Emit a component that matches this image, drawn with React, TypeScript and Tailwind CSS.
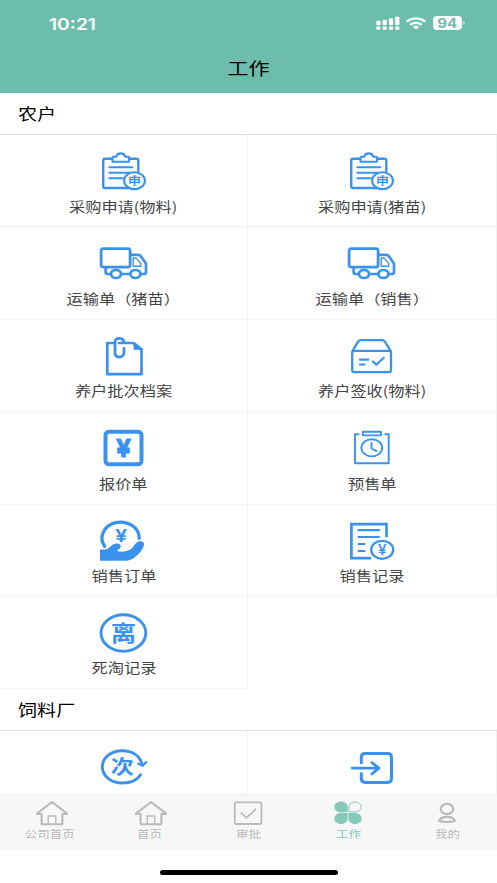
import type { ReactNode } from "react";

type IconProps = { children: ReactNode };

function Icon({ children }: IconProps) {
  return (
    <svg
      width="56"
      height="44"
      viewBox="0 0 56 44"
      fill="none"
      stroke="currentColor"
      strokeWidth="2.7"
      strokeLinecap="round"
      strokeLinejoin="round"
      className="shrink-0 overflow-visible text-[#3b92ee]"
    >
      {children}
    </svg>
  );
}

type GlyphProps = { x: number; y: number; size: number; children: string };

function Glyph({ x, y, size, children }: GlyphProps) {
  return (
    <text
      transform={`translate(${x} ${y}) scale(1.18 1)`}
      textAnchor="middle"
      fontSize={size}
      fontWeight={700}
      fill="currentColor"
      stroke="none"
      className="font-['Noto_Sans_CJK_SC',sans-serif]"
    >
      {children}
    </text>
  );
}

type YuanProps = { x: number; y: number; size: number; wide?: number; weight?: number; outline?: number };

function Yuan({ x, y, size, wide = 1.2, weight = 600, outline = 0.2 }: YuanProps) {
  return (
    <text
      transform={`translate(${x} ${y}) scale(${wide} 1)`}
      textAnchor="middle"
      fontSize={size}
      fontWeight={weight}
      fill="currentColor"
      strokeWidth={outline}
      className="font-['Inter',sans-serif]"
    >
      ¥
    </text>
  );
}

const ApplyIcon = () => (
  <Icon>
    <path d="M16 9.8H9Q7.2 9.8 7.2 11.5V37.3Q7.2 39 9 39H40.5Q42.3 39 42.3 37.3V11.5Q42.3 9.8 40.5 9.8H33" strokeWidth="2.4" />
    <path d="M16.5 12.8V8.5Q16.5 7.8 17.5 7.8H20.2Q21 4.4 24.7 4.4T29.2 7.8H32Q33 7.8 33 8.5V12.8Z" strokeWidth="2.1" />
    <path d="M13.3 18.3H36.3M13.3 23.7H36.3M13.3 29.3H27" strokeWidth="1.9" />
    <ellipse cx="38.5" cy="31.7" rx="10.4" ry="8.4" fill="white" strokeWidth="2.1" />
    <Glyph x={38.4} y={35.8} size={11}>申</Glyph>
  </Icon>
);

const TruckIcon = () => (
  <Icon>
    <rect x="5.1" y="7.7" width="29" height="18.4" rx="2.2" strokeWidth="2.8" />
    <path d="M35 13.9H42.2Q43.8 13.9 44.8 15.3L49.3 21.5Q50 22.5 50 24V31Q50 33 48 33H45M9.6 27V31.3Q9.6 33 11.5 33H15M25.5 33H34" />
    <path d="M37.2 17H39.5Q40.2 17 40.7 17.6L44.2 21.6Q44.7 22.2 44.7 23V25.3H37.2Z" strokeWidth="1.4" />
    <ellipse cx="20" cy="33" rx="5" ry="4" />
    <ellipse cx="39.4" cy="33" rx="5" ry="4" />
  </Icon>
);

const FileIcon = () => (
  <Icon>
    <path d="M17 9H11.3V40.2H45.5V16L37.5 9H23" />
    <path d="M38 8.5V15.3H46.5Z" fill="currentColor" strokeWidth="1" />
    <path d="M19 10V18.5Q19 23 23.3 23T28 18.5V14.5" strokeWidth="2.8" />
    <path d="M19 10V8Q19 4.3 23.3 4.3Q27 4.3 27.8 7.4" strokeWidth="2.8" />
  </Icon>
);

const SignIcon = () => (
  <Icon>
    <rect x="8.2" y="16.8" width="38.8" height="21.3" rx="2.2" strokeWidth="2.3" />
    <path d="M8.5 17L14.1 7.7Q15.1 6.1 17 6.1H38Q39.9 6.1 40.9 7.7L46.7 17" strokeWidth="2.3" />
    <path d="M16 25.7H24.3M16 30.5H20.5M28.8 27.5L32.3 30.8L39.7 23.8" strokeWidth="2.2" />
  </Icon>
);

const QuoteIcon = () => (
  <Icon>
    <rect x="9.5" y="5.7" width="36" height="32.6" rx="3.5" strokeWidth="4" />
    <Yuan x={27.4} y={31} size={24} wide={1.1} weight={700} outline={0.8} />
  </Icon>
);

const PresaleIcon = () => (
  <Icon>
    <g strokeWidth="1.9">
      <path d="M14.5 8.3H11V37.3H44.7V8.3H41.3" />
      <rect x="18.8" y="5.7" width="18.2" height="3.7" rx="0.5" />
      <ellipse cx="27.8" cy="21.8" rx="10.4" ry="8.6" />
      <path d="M27.5 17V22.5L32.5 25.1" />
    </g>
  </Icon>
);

const OrderIcon = () => (
  <Icon>
    <path d="M8.6 27.3A18.6 16 0 1 1 43.2 19.3" strokeWidth="3.3" />
    <Yuan x={25.2} y={23.2} size={17.5} />
    <path
      d="M4 30.4H9.5C13.5 30 15.5 25.2 20 24.6C23.5 24.3 25.8 26.3 24.2 29C23.3 30.5 21.2 31.2 21.2 31.8C24 33.5 32 33 36 29.3C38.3 27 39.3 23.2 43.5 22.3C46.6 21.8 48.5 23.4 48 25.8C47 30.5 42.5 36 37.5 39.2C34 41.2 32 41.7 28 41.7H4Z"
      fill="currentColor"
      stroke="none"
    />
  </Icon>
);

const RecordIcon = () => (
  <Icon>
    <path d="M42.5 18.3V5.2H7.4V39.2H27" strokeLinecap="butt" strokeLinejoin="miter" />
    <path d="M14.5 11.2H35M14.5 18H35M14.5 25H20.5M14.5 32H20.5" strokeWidth="2.2" />
    <ellipse cx="38.2" cy="30.8" rx="11" ry="9" fill="white" strokeWidth="2.3" />
    <Yuan x={38.2} y={36.1} size={14.5} wide={1.05} weight={500} />
  </Icon>
);

const DeathIcon = () => (
  <Icon>
    <ellipse cx="27.4" cy="22" rx="22.4" ry="18.3" strokeWidth="2.9" />
    <Glyph x={27.4} y={29.9} size={21.5}>离</Glyph>
  </Icon>
);

const BatchIcon = () => (
  <Icon>
    <path d="M46 19C43.5 10.5 36 5.8 26.3 5.8C15 5.8 6.3 12.7 6.3 21.8S15 38 26.3 38C34.5 38 41.5 34.8 44.5 29.7" strokeWidth="2.9" />
    <path d="M42.3 18.7L46.7 20.7L50.2 17" strokeWidth="2.3" />
    <Glyph x={26.3} y={29.3} size={19.5}>次</Glyph>
  </Icon>
);

const EnterIcon = () => (
  <Icon>
    <path d="M17.3 17.8V12.5Q17.3 8.6 21.3 8.6H43.5Q47.5 8.6 47.5 12.5V33.5Q47.5 37.4 43.5 37.4H21.3Q17.3 37.4 17.3 33.5V28.5" strokeWidth="3" />
    <path d="M8.2 23.2H34.6M28 17.7L35 23.2L28 28.9" strokeWidth="2.8" />
  </Icon>
);

const farmer = [
  { label: "采购申请(物料)", icon: <ApplyIcon /> },
  { label: "采购申请(猪苗)", icon: <ApplyIcon /> },
  { label: "运输单（猪苗）", icon: <TruckIcon /> },
  { label: "运输单（销售）", icon: <TruckIcon /> },
  { label: "养户批次档案", icon: <FileIcon /> },
  { label: "养户签收(物料)", icon: <SignIcon /> },
  { label: "报价单", icon: <QuoteIcon /> },
  { label: "预售单", icon: <PresaleIcon /> },
  { label: "销售订单", icon: <OrderIcon /> },
  { label: "销售记录", icon: <RecordIcon /> },
  { label: "死淘记录", icon: <DeathIcon /> },
];

const feedMill = [
  { label: "", icon: <BatchIcon /> },
  { label: "", icon: <EnterIcon /> },
];

type SectionProps = { title: string; items: { label: string; icon: ReactNode }[] };

function Section({ title, items }: SectionProps) {
  return (
    <section>
      <h2 className="flex h-[42px] items-center border-b border-[#dfdfdf] pl-[18px] text-[15.9px] text-black">
        <span className="origin-left scale-x-120">{title}</span>
      </h2>
      <div className="grid grid-cols-[248px_249px]">
        {items.map((item, i) => (
          <div key={i} className="flex h-[92.4px] flex-col items-center border-r border-b border-[#f2f2f2] pt-[14px]">
            {item.icon}
            <span className="mt-[2.5px] scale-x-120 text-[13.5px] leading-[20px] whitespace-nowrap text-[#444]">{item.label}</span>
          </div>
        ))}
      </div>
    </section>
  );
}

const HomeIcon = () => (
  <svg width="34" height="26" viewBox="0 0 34 26" fill="none" stroke="currentColor" strokeWidth="2.1" strokeLinejoin="round" strokeLinecap="round" className="ml-[4px]">
    <path d="M17 2L2.2 13.3Q1.5 14 2.7 14H6.6V23.5Q6.6 24.3 7.6 24.3H26.4Q27.4 24.3 27.4 23.5V14H31.3Q32.5 14 31.8 13.3Z" />
    <path d="M13.2 24V16H20.8V24" strokeWidth="1.4" />
  </svg>
);

const CheckIcon = () => (
  <svg width="34" height="26" viewBox="0 0 34 26" fill="none" stroke="currentColor" strokeWidth="1.8" strokeLinecap="round" strokeLinejoin="round">
    <rect x="3.8" y="2.3" width="26.6" height="21.7" rx="1.5" />
    <path d="M10.3 13.2L15.5 17.8L24.5 9.3" />
  </svg>
);

const CloverIcon = () => (
  <svg width="34" height="26" viewBox="0 0 34 26" fill="currentColor">
    <path d="M16.6 12.3H10.2C6.5 12.3 3.3 10 3.3 6.9S6.5 1.5 10.2 1.5S16.6 4 16.6 6.9Z" />
    <path d="M17.9 11.9H23.9C27.3 11.9 30.2 9.7 30.2 6.9S27.3 2 23.9 2S17.9 4.2 17.9 6.9Z" fill="none" stroke="currentColor" strokeWidth="1" />
    <path d="M16.6 12.9H10.2C6.5 12.9 3.3 15.3 3.3 18.5S6.5 24 10.2 24S16.6 21.5 16.6 18.5Z" />
    <path d="M17.4 12.9H23.8C27.5 12.9 30.7 15.3 30.7 18.5S27.5 24 23.8 24S17.4 21.5 17.4 18.5Z" />
  </svg>
);

const MineIcon = () => (
  <svg width="34" height="26" viewBox="0 0 34 26" fill="none" stroke="currentColor" strokeWidth="2.2">
    <ellipse cx="17" cy="9" rx="6.2" ry="5.2" />
    <path d="M9.2 20.7C10.5 17.7 13.5 16.9 17 16.9S23.5 17.7 24.8 20.7C22.5 22.4 11.5 22.4 9.2 20.7Z" strokeLinejoin="round" />
  </svg>
);

const tabs = [
  { label: "公司首页", icon: <HomeIcon /> },
  { label: "首页", icon: <HomeIcon /> },
  { label: "审批", icon: <CheckIcon /> },
  { label: "工作", icon: <CloverIcon />, active: true },
  { label: "我的", icon: <MineIcon /> },
];

function StatusBar() {
  return (
    <div className="flex h-[46px] items-center justify-between pr-[32px] pl-[49px] text-white">
      <span className="origin-left scale-x-[1.2] pt-px font-['Inter',sans-serif] text-[16px] font-semibold">10:21</span>
      <div className="flex items-center">
        <svg width="24" height="14" viewBox="0 0 24 14" fill="currentColor">
          <rect x="0.3" y="4.8" width="4.2" height="4.4" rx="1" />
          <rect x="6.6" y="3.8" width="4.2" height="5.4" rx="1" />
          <rect x="12.9" y="2.3" width="4.2" height="6.9" rx="1" />
          <rect x="19.2" y="0.7" width="4.2" height="8.5" rx="1" />
          <rect x="0.3" y="10.4" width="4.2" height="3.4" rx="1" />
          <rect x="6.6" y="10.4" width="4.2" height="3.4" rx="1" />
          <rect x="12.9" y="10.4" width="4.2" height="3.4" rx="1" />
          <rect x="19.2" y="10.4" width="4.2" height="3.4" rx="1" />
        </svg>
        <svg width="20" height="13" viewBox="0 0 20 13" fill="none" stroke="currentColor" strokeWidth="2.3" className="ml-[6px]">
          <path d="M0.8 4.7C6 0.3 14 0.3 19.2 4.7M4.2 7.9C7.5 5.1 12.5 5.1 15.8 7.9" />
          <path d="M6.8 9.9C8.7 8.5 11.3 8.5 13.2 9.9L10 12.6Z" fill="currentColor" stroke="none" />
        </svg>
        <div className="ml-[7px] flex h-[14px] w-[29px] items-center justify-center rounded-[4px] bg-white">
          <span className="scale-x-120 pt-[2px] font-['Inter',sans-serif] text-[12.5px] leading-[14px] font-bold text-[#6dbdac]">94</span>
        </div>
        <div className="ml-px h-[4px] w-[2px] rounded-r-full bg-white/50" />
      </div>
    </div>
  );
}

export default function App() {
  return (
    <div className="flex h-[883px] w-[497px] flex-col overflow-hidden bg-white font-['Noto_Sans_CJK_SC',sans-serif]">
      <header className="h-[93px] shrink-0 bg-[#6dbdac]">
        <StatusBar />
        <h1 className="flex h-[44px] items-center justify-center text-[17.5px] text-black">
          <span className="scale-x-120">工作</span>
        </h1>
      </header>

      <main className="h-[700px] shrink-0 overflow-hidden">
        <Section title="农户" items={farmer} />
        <Section title="饲料厂" items={feedMill} />
      </main>

      {/* Tab bar */}
      <nav className="grid h-[57px] shrink-0 grid-cols-5 bg-[#f7f7f7]">
        {tabs.map((tab) => (
          <div key={tab.label} className={`flex flex-col items-center pt-[7px] ${tab.active ? "text-[#84c9ba]" : "text-[#b9babc]"}`}>
            {tab.icon}
            <span className="scale-x-120 text-[10.4px] leading-[15px]">{tab.label}</span>
          </div>
        ))}
      </nav>

      <div className="flex grow justify-center pt-[20px]">
        <div className="h-[5px] w-[178px] rounded-full bg-black" />
      </div>
    </div>
  );
}
